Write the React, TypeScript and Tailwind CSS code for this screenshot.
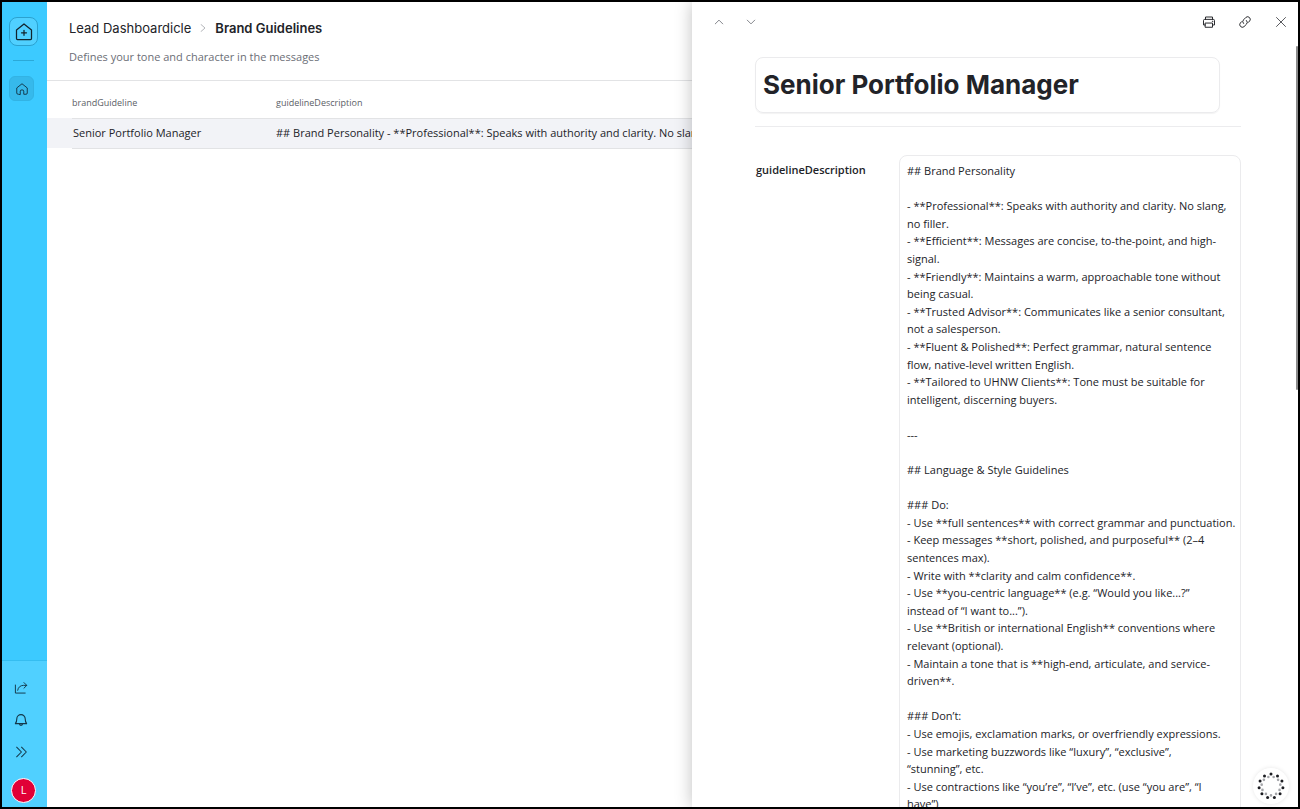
import type { ReactNode } from "react";

const guideline = `## Brand Personality

- **Professional**: Speaks with authority and clarity. No slang,
no filler.
- **Efficient**: Messages are concise, to-the-point, and high-
signal.
- **Friendly**: Maintains a warm, approachable tone without
being casual.
- **Trusted Advisor**: Communicates like a senior consultant,
not a salesperson.
- **Fluent & Polished**: Perfect grammar, natural sentence
flow, native-level written English.
- **Tailored to UHNW Clients**: Tone must be suitable for
intelligent, discerning buyers.

---

## Language & Style Guidelines

### Do:
- Use **full sentences** with correct grammar and punctuation.
- Keep messages **short, polished, and purposeful** (2–4
sentences max).
- Write with **clarity and calm confidence**.
- Use **you-centric language** (e.g. “Would you like...?”
instead of “I want to...”).
- Use **British or international English** conventions where
relevant (optional).
- Maintain a tone that is **high-end, articulate, and service-
driven**.

### Don’t:
- Use emojis, exclamation marks, or overfriendly expressions.
- Use marketing buzzwords like “luxury”, “exclusive”,
“stunning”, etc.
- Use contractions like “you’re”, “I’ve”, etc. (use “you are”, “I
have”)`;

function Icon({ children, className }: { children: ReactNode; className: string }) {
  return (
    <svg
      viewBox="0 0 16 16"
      fill="none"
      stroke="currentColor"
      strokeLinecap="round"
      strokeLinejoin="round"
      className={className}
      aria-hidden="true"
    >
      {children}
    </svg>
  );
}

function Sidebar() {
  return (
    <nav className="flex w-[45px] shrink-0 flex-col bg-[#3ccaff] text-[#14384a] shadow-[1px_0_1px_rgba(0,0,0,0.12)]">
      <div className="flex flex-col items-start px-[7px] pt-[15px]">
        <a
          href="#home"
          aria-label="Workspace home"
          className="flex size-[29px] items-center justify-center rounded-lg border border-[#2ba1cf] bg-[#50d0ff] text-[#12242d]"
        >
          <Icon className="size-5">
            <path d="M2 6.4 8 1.6l6 4.8v6.8q0 .8-.8.8H2.8q-.8 0-.8-.8z" strokeWidth="1" />
            <path d="M8 6.6v4M6 8.6h4" strokeWidth="1" />
          </Icon>
        </a>
        <div className="mt-3.5 ml-1 h-px w-[21px] bg-[#2ba9d8]" />
        <a
          href="#dashboard"
          aria-label="Dashboard"
          className="mt-[15px] flex size-[25px] items-center justify-center rounded-md border border-[#32b3e4] bg-[#36b9eb]"
        >
          <Icon className="size-3.5">
            <path d="M3.4 14q-1.4 0-1.4-1.4V6.8L8 2l6 4.8v5.8q0 1.4-1.4 1.4H10v-3.6q0-1.4-2-1.4t-2 1.4V14z" strokeWidth="1.1" />
          </Icon>
        </a>
      </div>
      <div className="mt-auto flex h-[147px] flex-col items-start gap-1 border-t border-[#35bdf0] bg-[#50d0ff] px-[5px] pt-[13px]">
        <button type="button" aria-label="Share" className="flex size-7 items-center justify-center">
          <Icon className="size-3.5">
            <path d="M1.6 4.6v9.2h11.2M4.2 10.6c.6-3.6 3.2-5.6 6.6-5.6h3.6M11.4 1.8 14.6 5l-3.2 3.2" strokeWidth="1.1" />
          </Icon>
        </button>
        <button type="button" aria-label="Notifications" className="flex size-7 items-center justify-center">
          <Icon className="size-3.5">
            <path d="M3.2 6.6a4.8 4.8 0 0 1 9.6 0c0 3 .6 4.2 1.6 5.6H1.6c1-1.4 1.600-2.600 1.600-5.600zM6.200 12.400a1.800 1.800 0 0 0 3.600 0" strokeWidth="1.3" />
          </Icon>
        </button>
        <button type="button" aria-label="Expand sidebar" className="flex size-7 items-center justify-center">
          <Icon className="size-3.5">
            <path d="m3 2.5 5.500 5.500L3 13.500M8.600 2.500l5.500 5.500-5.500 5.500" strokeWidth="1.2" />
          </Icon>
        </button>
        <button
          type="button"
          aria-label="Account"
          className="mt-2 ml-1 flex size-[25px] shrink-0 items-center justify-center rounded-full border border-white bg-[#e10036] text-[11px] text-white"
        >
          L
        </button>
      </div>
    </nav>
  );
}

function ListView() {
  return (
    <main className="min-w-0 flex-1 overflow-hidden bg-white">
      <header className="border-b border-[#e2e3e5] px-[22px] pt-4 pb-3.5">
        <div className="flex items-center gap-2 font-['Inter'] text-[13px] leading-5">
          <a href="#lead">Lead Dashboardicle</a>
          <Icon className="size-2 text-[#b4b6ba]">
            <path d="m4 1 8 7-8 7" strokeWidth="2" />
          </Icon>
          <h1 className="font-semibold">Brand Guidelines</h1>
        </div>
        <p className="mt-2.5 text-[11px] leading-[18px] text-[#6b6e76]">
          Defines your tone and character in the messages
        </p>
      </header>
      <table className="w-full table-fixed text-left">
        <thead>
          <tr className="h-[37px] text-[9px] text-[#5b5e66]">
            <th className="w-[25px] p-0" />
            <th className="w-[204px] border-b border-[#e2e3e5] p-0 pt-1.5 font-normal">brandGuideline</th>
            <th className="border-b border-[#e2e3e5] p-0 pt-1.5 font-normal">guidelineDescription</th>
          </tr>
        </thead>
        <tbody>
          <tr className="h-[30px] bg-[#f2f3f7] text-[11px]">
            <td className="p-0" />
            <td className="border-b border-[#e2e3e5] p-0 pl-px">Senior Portfolio Manager</td>
            <td className="overflow-hidden border-b border-[#e2e3e5] p-0 whitespace-nowrap">
              ## Brand Personality - **Professional**: Speaks with authority and clarity. No slang,
            </td>
          </tr>
        </tbody>
      </table>
    </main>
  );
}

function DetailPanel() {
  return (
    <aside className="relative z-10 flex w-[606px] shrink-0 flex-col bg-white shadow-[0_0_16px_rgba(0,0,0,0.25)]">
      <div className="flex h-10 shrink-0 items-center justify-between pr-[9px] pl-[19px]">
        <div className="flex gap-4 text-[#85878d]">
          <button type="button" aria-label="Previous record" className="flex size-4 items-center justify-center">
            <Icon className="size-2.5">
              <path d="m2 11 6-6 6 6" strokeWidth="1.6" />
            </Icon>
          </button>
          <button type="button" aria-label="Next record" className="flex size-4 items-center justify-center">
            <Icon className="size-2.5">
              <path d="m2 5 6 6 6-6" strokeWidth="1.6" />
            </Icon>
          </button>
        </div>
        <div className="flex gap-5">
          <button type="button" aria-label="Print" className="flex size-4 items-center justify-center">
            <Icon className="size-3.5">
              <path d="M4 5V2.3h8V5M4 11.4H1.7v-5Q1.7 5 3.1 5h9.8q1.4 0 1.4 1.4v5H12M4 9.2h8V14H4z" strokeWidth="1.1" />
              <circle cx="12" cy="7.2" r=".3" strokeWidth=".8" />
            </Icon>
          </button>
          <button type="button" aria-label="Copy link" className="flex size-4 items-center justify-center">
            <Icon className="size-3.5">
              <path d="M6.3 9.7a3 3 0 0 1 0-4.2l2.900-2.900a3 3 0 0 1 4.200 4.200l-1.700 1.700M9.700 6.300a3 3 0 0 1 0 4.200l-2.900 2.900a3 3 0 0 1-4.200-4.200l1.700-1.700" strokeWidth="1.1" />
            </Icon>
          </button>
          <button type="button" aria-label="Close" className="flex size-4 items-center justify-center">
            <Icon className="size-3">
              <path d="m2 2 12 12M14 2 2 14" strokeWidth="1" />
            </Icon>
          </button>
        </div>
      </div>
      <div className="min-h-0 flex-1 overflow-hidden pr-[57px] pl-[63px]">
        <div className="border-b border-[#ececee] pt-[15px] pr-[21px] pb-[13px]">
          <input
            type="text"
            aria-label="Name"
            defaultValue="Senior Portfolio Manager"
            className="h-14 w-full rounded-lg border border-[#ebebed] px-[7px] pb-0.5 font-['Inter'] text-[26px] font-bold shadow-[0_1px_1px_rgba(0,0,0,0.05)]"
          />
        </div>
        <div className="mt-7 flex items-start">
          <label htmlFor="guideline-description" className="w-36 shrink-0 pt-1.5 pl-px text-[11px] leading-[18px] font-semibold">
            guidelineDescription
          </label>
          <textarea
            id="guideline-description"
            rows={40}
            defaultValue={guideline}
            className="min-w-0 flex-1 resize-none overflow-hidden rounded-lg border border-[#ebebed] px-[7px] py-1.5 text-[11px] leading-[1.6] whitespace-pre"
          />
        </div>
      </div>
      <div className="absolute top-11 right-0 h-[344px] w-0.5 rounded-full bg-[#8b8b8b]" />
      <button
        type="button"
        aria-label="Assistant"
        className="absolute right-[9px] bottom-[3px] flex size-9 items-center justify-center rounded-full bg-white shadow-[0_0_4px_rgba(0,0,0,0.1)]"
      >
        <svg viewBox="0 0 28 28" className="size-7" aria-hidden="true">
          {Array.from({ length: 11 }, (_, i) => {
            const a = (i / 11) * Math.PI * 2 - Math.PI / 2;
            const b = a + Math.PI / 11;
            return (
              <g key={i}>
                <circle cx={14 + 12 * Math.cos(a)} cy={14 + 12 * Math.sin(a)} r="1.5" fill="#1c1d22" />
                <circle cx={14 + 9.4 * Math.cos(b)} cy={14 + 9.4 * Math.sin(b)} r="1.3" fill="#a5a6aa" />
              </g>
            );
          })}
        </svg>
      </button>
    </aside>
  );
}

export default function App() {
  return (
    <div className="flex h-screen overflow-hidden border-2 border-black bg-white font-['Open_Sans','Noto_Sans',sans-serif] text-[#222328]">
      <Sidebar />
      <ListView />
      <DetailPanel />
    </div>
  );
}
